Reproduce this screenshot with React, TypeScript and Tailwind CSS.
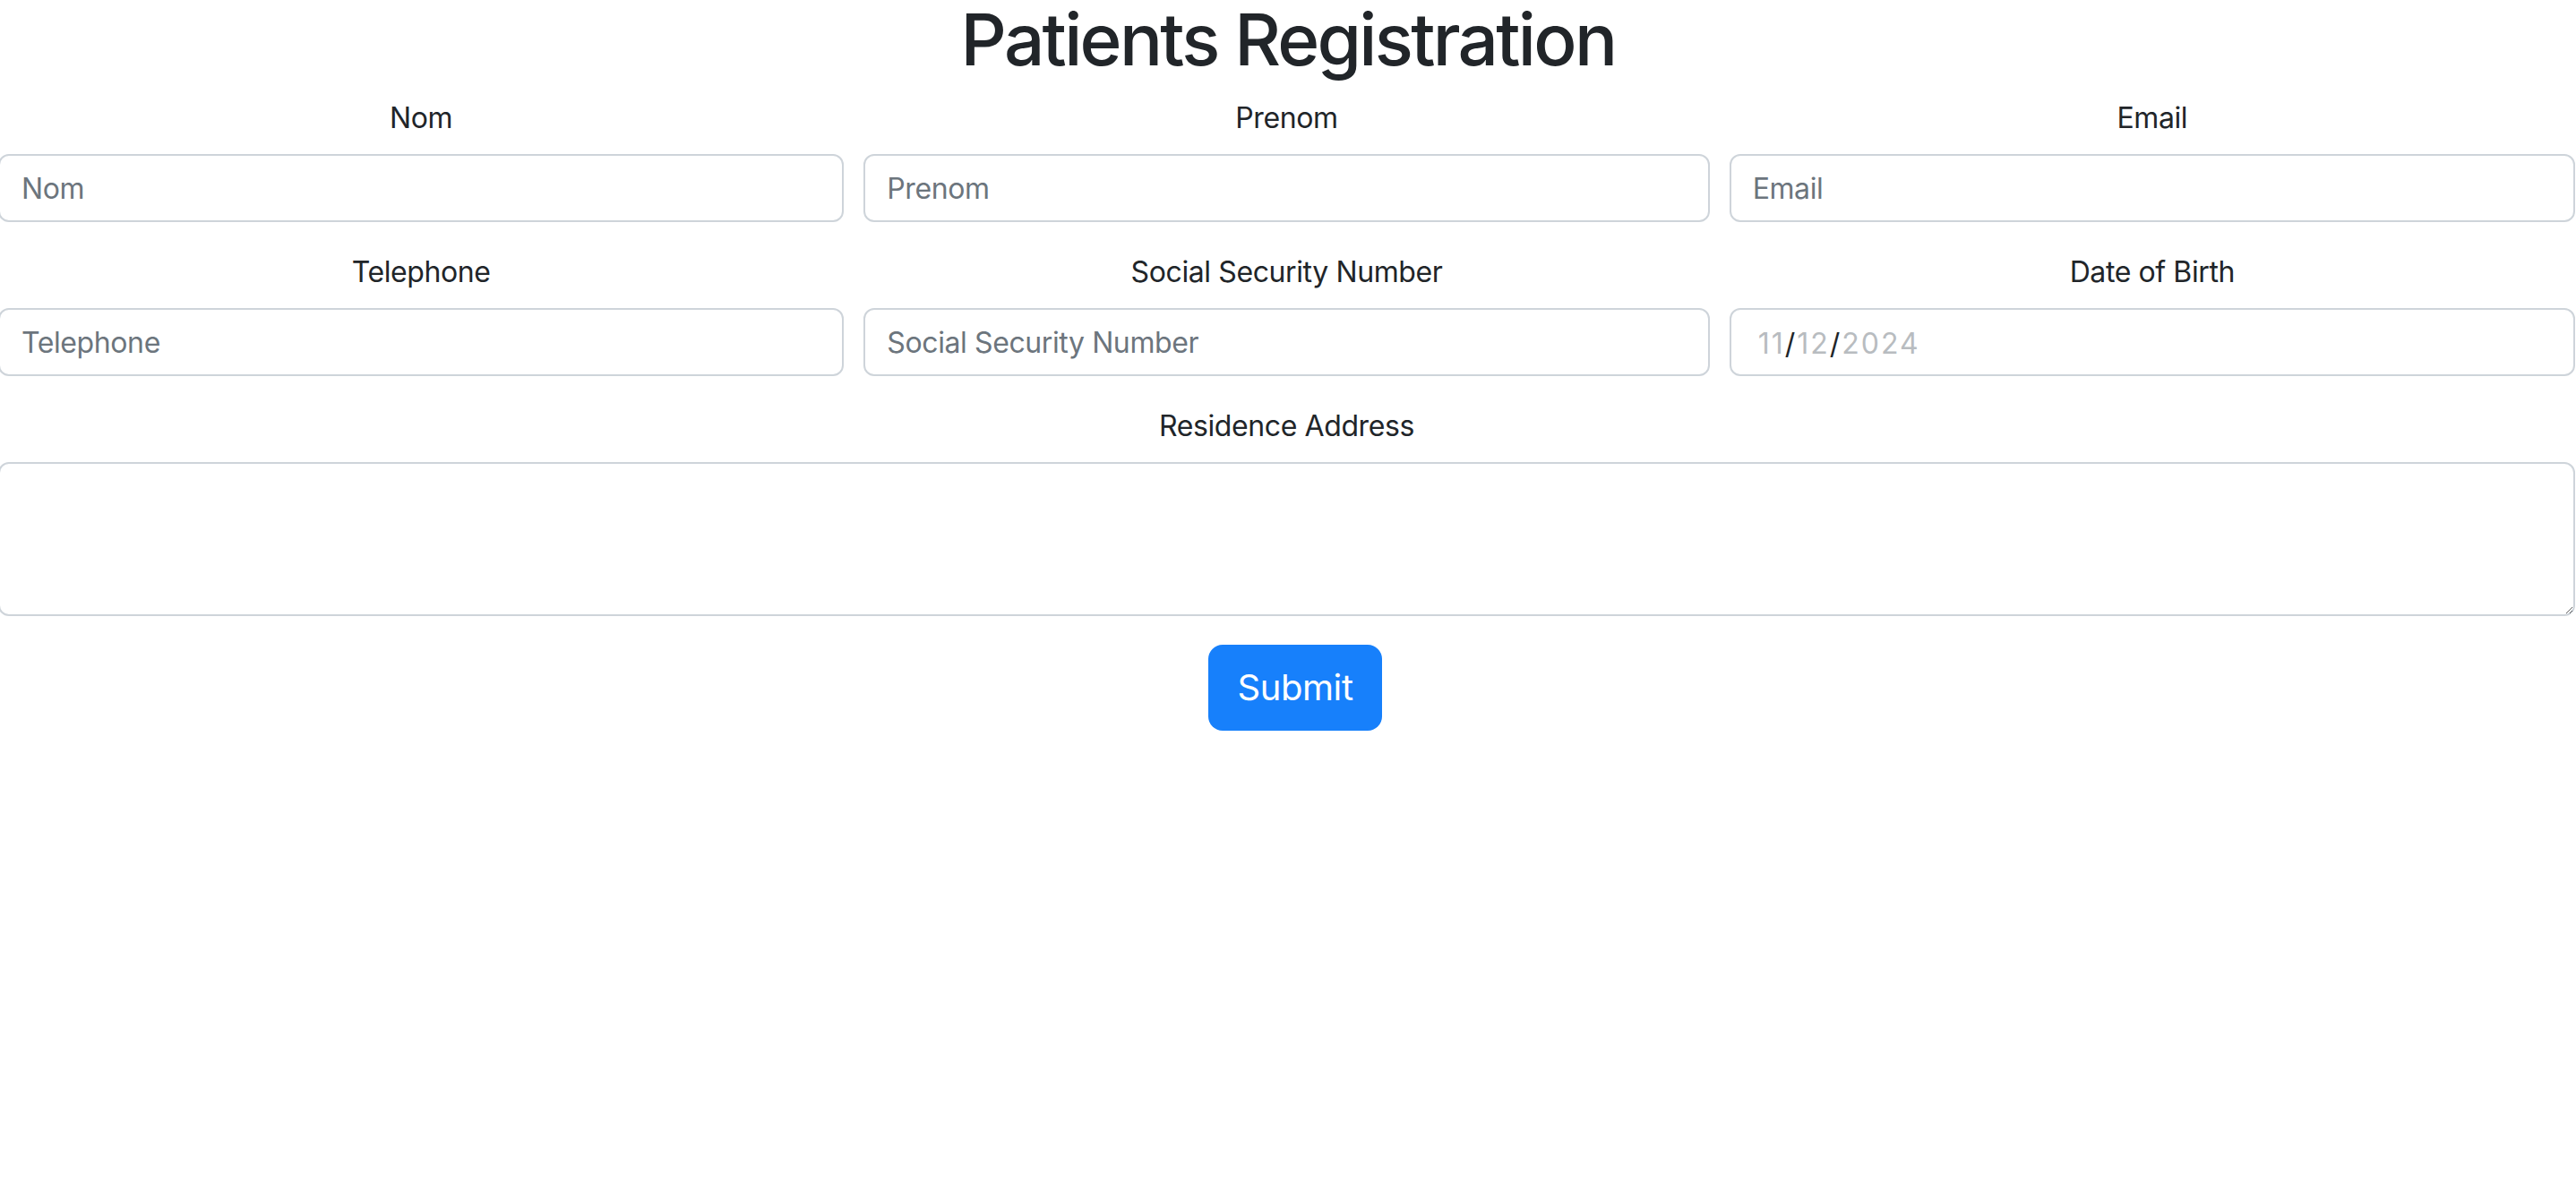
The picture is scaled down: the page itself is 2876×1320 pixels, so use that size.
import React from "react";

const fieldClass =
  "block w-full h-[76px] px-[24px] py-[12px] text-[32px] leading-[48px] tracking-[-0.4px] text-[#212529] bg-white border-2 border-[#ced4da] rounded-[12px] outline-none placeholder:text-[#6c757d]";

const labelClass =
  "block text-center text-[32px] leading-[48px] tracking-[-0.4px] text-[#212529] mb-[16px]";

function Field({ label, placeholder, type = "text" }: { label: string; placeholder: string; type?: string }) {
  return (
    <div>
      <label className={labelClass}>{label}</label>
      <input type={type} placeholder={placeholder} className={fieldClass} />
    </div>
  );
}

function DateField({ label }: { label: string }) {
  return (
    <div>
      <label className={labelClass}>{label}</label>
      <div className="flex items-center h-[76px] pl-[30px] pr-[24px] bg-white border-2 border-[#ced4da] rounded-[12px] text-[32px] leading-[48px] tracking-[2px]">
        <span className="text-[#b8bcc0] pt-[4px]">
          11<span className="text-[#212529]">/</span>12<span className="text-[#212529]">/</span>2024
        </span>
      </div>
    </div>
  );
}

export default function App() {
  return (
    <div className="min-h-screen bg-white font-['Inter','Liberation_Sans',sans-serif] text-[#212529]">
      <h1 className="text-center text-[80px] leading-[88px] font-medium mb-[20px] tracking-[-2.7px]">
        Patients Registration
      </h1>

      <form className="-ml-[2px] mr-px" onSubmit={(e) => e.preventDefault()}>
        <div className="grid grid-cols-3 gap-x-[22px] gap-y-[32px]">
          <Field label="Nom" placeholder="Nom" />
          <Field label="Prenom" placeholder="Prenom" />
          <Field label="Email" placeholder="Email" type="email" />
          <Field label="Telephone" placeholder="Telephone" />
          <Field label="Social Security Number" placeholder="Social Security Number" />
          <DateField label="Date of Birth" />
        </div>

        <div className="mt-[32px]">
          <label className={labelClass}>Residence Address</label>
          <textarea
            rows={3}
            className="block w-full h-[172px] px-[24px] py-[12px] text-[32px] leading-[48px] text-[#212529] bg-white border-2 border-[#ced4da] rounded-[12px] outline-none resize-y"
          />
        </div>

        <div className="mt-[32px] text-center">
          <button
            type="submit"
            className="inline-block ml-[19px] h-[96px] px-[32px] text-[40px] leading-[60px] tracking-[-0.4px] text-white bg-[#1780fb] rounded-[16px]"
          >
            Submit
          </button>
        </div>
      </form>
    </div>
  );
}
